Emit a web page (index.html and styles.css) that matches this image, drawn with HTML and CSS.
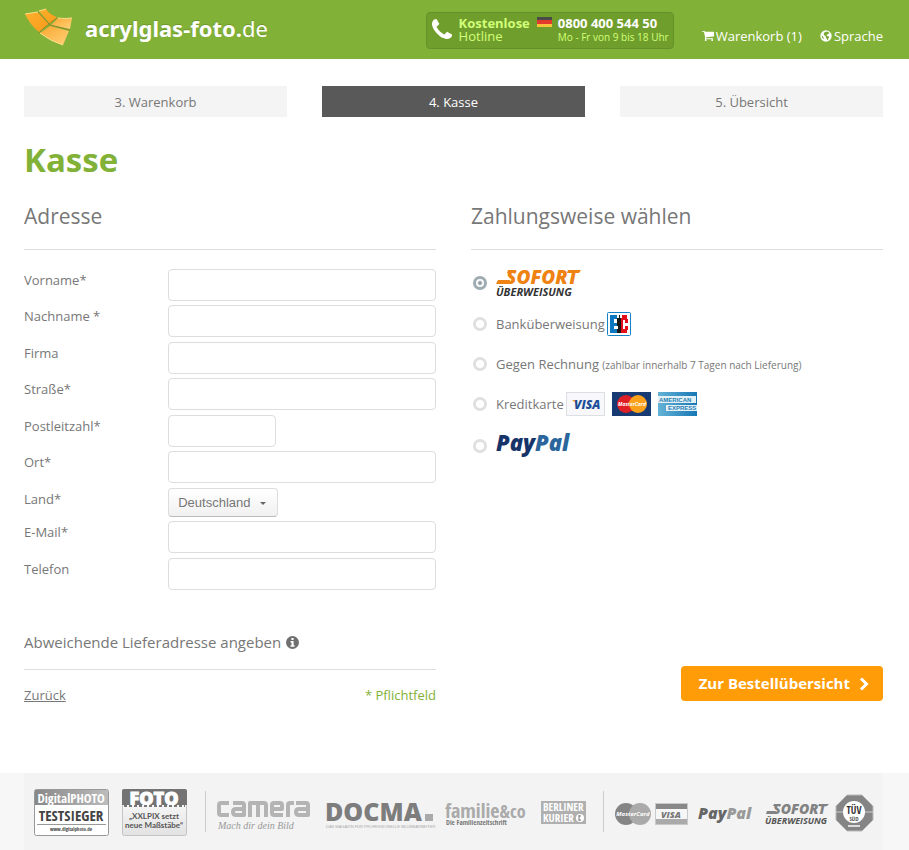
FILE: index.html
```html
<!DOCTYPE html>
<html lang="de">
<head>
<meta charset="utf-8">
<title>Kasse – acrylglas-foto.de</title>
<link rel="stylesheet" href="styles.css">
</head>
<body>
<header class="site-header">
  <a class="brand" href="#">
    <svg class="brand-mark" width="50" height="38" viewBox="0 0 50 38" aria-hidden="true">
      <defs>
        <linearGradient id="tile" x1="0" y1="0" x2="1" y2="1"><stop offset="0" stop-color="#ffb02b"/><stop offset="1" stop-color="#f99a1c"/></linearGradient>
        <linearGradient id="tileLight" x1="0" y1="0" x2="1" y2="1"><stop offset="0" stop-color="#fba62f"/><stop offset="1" stop-color="#ffd27a"/></linearGradient>
      </defs>
      <path d="M1 5 L14 3 L25 15 L15 23 Q6 16 1 5Z" fill="url(#tile)"/>
      <path d="M15 2 L22 0 Q26 6 33 8 L26 15Z" fill="url(#tile)"/>
      <path d="M34 9 Q40 11 48 9 L46 20 L27 16Z" fill="url(#tileLight)"/>
      <path d="M26 17 L45 22 L39 36 Q26 32 16 24Z" fill="url(#tileLight)"/>
      <path d="M1 5 L14 3M15 2 L22 0M34 9 Q41 10 48 9M16 24Q26 32 39 36" stroke="#fbe08c" fill="none"/>
      <path d="M14 3 L26 16 M15 24 Q19 19 33 9 M26 16 L46 21" stroke="#8f8b28" fill="none"/>
    </svg>
    <span class="brand-name"><b>acrylglas-foto.</b>de</span>
  </a>
  <div class="hotline">
    <svg class="hotline-phone" width="20" height="20" viewBox="192 256 1408 1280" aria-hidden="true"><path fill="#fff" d="M1600 1240q0 27-10 70.500t-21 68.500q-21 50-122 106-94 51-186 51-27 0-53-3.500t-57.500-12.500-47-14.500-55.500-20.500-49-18q-98-35-175-83-127-79-264-216t-216-264q-48-77-83-175-3-9-18-49t-20.500-55.500-14.500-47-12.500-57.500-3.500-53q0-92 51-186 56-101 106-122 25-11 68.500-21t70.500-10q14 0 21 3 18 6 53 76 11 19 30 54t35 63.500 31 53.500q3 4 17.500 25t21.500 35.500 7 28.500q0 20-28.500 50t-62 55-62 53-28.500 46q0 9 5 22.500t8.500 20.500 14 24 11.500 19q76 137 174 235t235 174q2 1 19 11.500t24 14 20.500 8.500 22.500 5q18 0 46-28.500t53-62 55-62 50-28.500q14 0 28.500 7t35.500 21.500 25 17.500q25 15 53.500 31t63.500 35 54 30q70 35 76 53 3 7 3 21z"/></svg>
    <div class="hotline-label"><b>Kostenlose</b><span>Hotline</span></div>
    <svg class="flag" width="15" height="10" viewBox="0 0 15 10" aria-hidden="true"><path fill="#4a4a4a" d="M0 0h15v3H0z"/><path fill="#e23a2c" d="M0 3h15v4H0z"/><path fill="#f9c33c" d="M0 7h15v3H0z"/></svg>
    <div class="hotline-number"><b>0800 400 544 50</b><small>Mo - Fr von 9 bis 18 Uhr</small></div>
  </div>
  <nav class="header-nav">
    <a href="#"><svg width="12" height="12" viewBox="0 128 1664 1664" aria-hidden="true"><path fill="#fff" d="M640 1536q0 52-38 90t-90 38-90-38-38-90 38-90 90-38 90 38 38 90zm896 0q0 52-38 90t-90 38-90-38-38-90 38-90 90-38 90 38 38 90zm128-1088v512q0 24-16.500 42.500t-40.500 21.500l-1044 122q13 60 13 70 0 16-24 64h920q26 0 45 19t19 45-19 45-45 19h-1024q-26 0-45-19t-19-45q0-11 8-31.500t16-36 21.500-40 15.500-29.500l-177-823h-204q-26 0-45-19t-19-45 19-45 45-19h256q16 0 28.500 6.500t19.500 15.500 13 24.500 8 26 5.500 29.500 4.500 26h1201q26 0 45 19t19 45z"/></svg>Warenkorb (1)</a>
    <a href="#"><svg width="12" height="12" viewBox="0 0 12 12" aria-hidden="true"><circle cx="6" cy="6" r="5.700" fill="#fff"/><path fill="#78a92f" d="M7 1.600 9 2.400 9.800 3.500 8.400 3.400 7.600 4.600 6.500 4.800 7 6 8.600 6.200 9 7.400 7.800 9.800 7 10.200 6.800 8.600 5.400 7.300 6 5.900 4.400 5.400 3.600 3.900 4.300 2.600ZM1.600 5.400 2.800 6.300 3.700 8 3.600 9.200 2.200 7.800Z"/></svg>Sprache</a>
  </nav>
</header>

<main class="page">
  <ol class="steps">
    <li>3. Warenkorb</li>
    <li class="is-current">4. Kasse</li>
    <li>5. Übersicht</li>
  </ol>
  <h1>Kasse</h1>
  <form class="checkout">
    <section>
      <h2>Adresse</h2>
      <div class="fields">
        <div class="field"><label for="vorname">Vorname*</label><input id="vorname" type="text"></div>
        <div class="field"><label for="nachname">Nachname *</label><input id="nachname" type="text"></div>
        <div class="field"><label for="firma">Firma</label><input id="firma" type="text"></div>
        <div class="field"><label for="strasse">Straße*</label><input id="strasse" type="text"></div>
        <div class="field"><label for="plz">Postleitzahl*</label><input id="plz" class="short" type="text"></div>
        <div class="field"><label for="ort">Ort*</label><input id="ort" type="text"></div>
        <div class="field field-select"><label for="land">Land*</label><span class="select"><select id="land"><option>Deutschland</option></select></span></div>
        <div class="field"><label for="email">E-Mail*</label><input id="email" type="email"></div>
        <div class="field"><label for="telefon">Telefon</label><input id="telefon" type="tel"></div>
      </div>
      <h3>Abweichende Lieferadresse angeben
        <svg width="13" height="13" viewBox="0 0 13 13" aria-hidden="true"><circle cx="6.500" cy="6.500" r="6.500" fill="#6f6f6f"/><path fill="#fff" d="M5.400 2h2.200v2H5.400zM4.500 5h3.100v4.200h1v1.600H4.500V9.200h1V6.600h-1z"/></svg>
      </h3>
      <div class="form-foot"><a href="#">Zurück</a><span>* Pflichtfeld</span></div>
    </section>
    <section class="payment">
      <h2>Zahlungsweise wählen</h2>
      <div class="options">
        <div class="option">
          <input type="radio" name="pay" id="sofort" checked>
          <label for="sofort">
            <svg width="86" height="30" viewBox="0 0 86 30" role="img" aria-label="Sofort Überweisung">
              <path fill="#ee8212" d="M2 12h12l-1 4H0zM12 2h8l-1 3h-8zM72 2h13l-2 3H71z"/>
              <text class="lg-sofort" x="10" y="16">SOFORT</text>
              <text class="lg-ueber" x="0" y="28">ÜBERWEISUNG</text>
            </svg>
          </label>
        </div>
        <div class="option">
          <input type="radio" name="pay" id="bank">
          <label for="bank">Banküberweisung
            <svg width="24" height="24" viewBox="0 0 24 24" aria-hidden="true"><rect x=".5" y=".5" width="23" height="23" rx="1" fill="#fff" stroke="#1682c6"/><path fill="#0b78c0" d="M3 3h8v18H3z"/><path fill="#181818" d="M10 3h4v18h-4z"/><path fill="#e3101b" d="M14 3h7v18h-7z"/><path fill="#fff" d="M7 7h3v4H7zM7 14h4v3H7zM10 3h2v3h-2zM16 8h2v3h3v3h-3v3h-2zM13 3h2v3h-2zM20 3h1v4h-1zM20 18h1v3h-1z"/></svg>
          </label>
        </div>
        <div class="option">
          <input type="radio" name="pay" id="rechnung">
          <label for="rechnung"><span>Gegen Rechnung <small>(zahlbar innerhalb 7 Tagen nach Lieferung)</small></span></label>
        </div>
        <div class="option">
          <input type="radio" name="pay" id="karte">
          <label for="karte">Kreditkarte
            <svg class="cards" width="132" height="24" viewBox="0 0 132 24" role="img" aria-label="Visa, MasterCard, American Express">
              <defs><linearGradient id="amex"><stop offset="0" stop-color="#65b3d6"/><stop offset="1" stop-color="#1677b5"/></linearGradient></defs>
              <rect x=".5" y=".5" width="38" height="23" fill="#f8f8fa" stroke="#dcdfe4"/>
              <path fill="#f3a21b" d="M6 8h4l1 4z"/>
              <text class="lg-visa" x="8" y="17">VISA</text>
              <rect x="46" width="39" height="24" fill="#173a72"/>
              <circle cx="60" cy="12" r="9" fill="#df1f26"/><circle cx="72" cy="12" r="9" fill="#f9a11b"/>
              <text class="lg-mc" x="66" y="14" text-anchor="middle">MasterCard</text>
              <rect x="92" width="39" height="24" fill="url(#amex)"/>
              <path fill="#e3f1f7" d="M92 4h38v7H92zM100 13h31v6h-31z"/>
              <text class="lg-amex" x="93" y="10">AMERICAN</text><text class="lg-amex" x="102" y="18">EXPRESS</text>
            </svg>
          </label>
        </div>
        <div class="option">
          <input type="radio" name="pay" id="paypal">
          <label for="paypal">
            <svg width="80" height="26" viewBox="0 0 80 26" role="img" aria-label="PayPal"><text class="lg-paypal" x="0" y="18"><tspan fill="#17346a">Pay</tspan><tspan fill="#2a659c">Pal</tspan></text></svg>
          </label>
        </div>
      </div>
      <button class="submit" type="submit">Zur Bestellübersicht
        <svg width="10" height="14" viewBox="0 0 10 14" aria-hidden="true"><path d="M2 1.500 7.500 7 2 12.500" fill="none" stroke="#fff" stroke-width="3"/></svg>
      </button>
    </section>
  </form>
</main>

<footer class="site-footer">
  <div class="logos">
    <svg width="78" height="48" viewBox="0 0 78 48" role="img" aria-label="DigitalPHOTO Testsieger">
      <defs><linearGradient id="silver"><stop offset="0" stop-color="#888"/><stop offset="1" stop-color="#bcbcbc"/></linearGradient></defs>
      <rect x=".5" y=".5" width="74" height="46" rx="2" fill="#fff" stroke="#999"/><path fill="url(#silver)" d="M1 1h73v15H1z"/>
      <text class="lg-cond" x="37" y="14" font-size="13" fill="#fff" text-anchor="middle">Digital<tspan font-weight="700">PHOTO</tspan></text>
      <text class="lg-cond" x="37" y="32" font-size="15" font-weight="700" fill="#444" text-anchor="middle">TESTSIEGER</text>
      <path stroke="#999" d="M3 35.500h69"/>
      <text class="lg-cond" x="37" y="42" font-size="5" font-weight="700" fill="#444" text-anchor="middle">www.digitalphoto.de</text>
    </svg>
    <svg width="73" height="48" viewBox="0 0 73 48" role="img" aria-label="Foto Wirtschaft">
      <defs><linearGradient id="paper" x2="0" y2="1"><stop offset="0" stop-color="#fff"/><stop offset="1" stop-color="#e2e2e2"/></linearGradient></defs>
      <rect x=".5" y=".5" width="64" height="46" rx="2" fill="url(#paper)" stroke="#c4c4c4"/><path fill="#737373" d="M0 2q0-2 2-2h61q2 0 2 2v14H0z"/>
      <text class="lg-heavy" x="32" y="16" font-size="18" text-anchor="middle" fill="#fff" stroke="#fff">FOTO</text>
      <path stroke="#777" stroke-dasharray="3 2" stroke-width="2" d="M2 17h61"/>
      <text class="lg-round" x="32" y="30" text-anchor="middle">„XXLPIX setzt</text><text class="lg-round" x="32" y="39" text-anchor="middle">neue Maßstäbe“</text>
    </svg>
    <span class="rule"></span>
    <svg width="100" height="48" viewBox="0 0 100 48" role="img" aria-label="camera – Mach dir dein Bild">
      <g fill="none" stroke="#b4b4b4" stroke-width="4" stroke-linejoin="round">
        <path d="M13 14H5q-2 0-2 2v8q0 2 2 2h8M17 14h9q2 0 2 2v10h-8q-3 0-3-3t3-3h8M34 28V14h14q2 0 2 2v12M42 14v14M56 20h10v-4q0-2-2-2h-6q-2 0-2 2v8q0 2 2 2h9M72 28V16q0-2 2-2h4M80 14h10q2 0 2 2v10h-9q-3 0-3-3t3-3h9"/>
      </g>
      <text class="lg-script" x="2" y="40">Mach dir dein Bild</text>
    </svg>
    <svg width="109" height="48" viewBox="0 0 109 48" role="img" aria-label="DOCMA">
      <text x="-1" y="32" font-family="Open Sans, sans-serif" font-weight="800" font-size="25" fill="#7d7d7d">DOCMA</text><path fill="#aaa" d="M99 25h8v7h-8z"/>
      <text class="lg-micro" x="0" y="39">DAS MAGAZIN FÜR PROFESSIONELLE BILDBEARBEITER</text>
    </svg>
    <svg width="86" height="48" viewBox="0 0 86 48" role="img" aria-label="familie&amp;co – Die Familienzeitschrift">
      <text class="lg-cond" x="0" y="29" font-size="20" font-weight="700" fill="#aaa">familie<tspan font-weight="400" font-size="18">&amp;co</tspan></text>
      <text class="lg-cond" x="1" y="36" font-size="7" font-weight="700" fill="#777">Die Familienzeitschrift</text>
    </svg>
    <svg width="52" height="48" viewBox="0 0 52 48" role="img" aria-label="Berliner Kurier">
      <path fill="#b0b0b0" d="M0 12h45v23H0z"/>
      <text class="lg-cond" x="2" y="22" font-size="11" font-weight="700" fill="#fff">BERLINER</text><text class="lg-cond" x="2" y="33" font-size="11" font-weight="700" fill="#fff">KURIER</text><circle cx="39" cy="29" r="4" fill="#fff"/><path d="M38 26v6M38 27h2M38 31h2" stroke="#777"/>
    </svg>
    <span class="rule"></span>
    <svg width="74" height="48" viewBox="0 0 74 48" role="img" aria-label="MasterCard und Visa">
      <circle cx="12" cy="25" r="11" fill="#858585"/><circle cx="26" cy="25" r="11" fill="#aaa"/><text class="lg-mc lg-mc-grey" x="19" y="27" text-anchor="middle">MasterCard</text>
      <rect x="41" y="14" width="33" height="22" fill="#c9c9c9"/><path fill="#888" d="M42 15h31v5H42z"/><path fill="#f6f6f6" d="M42 20h31v10H42z"/><path fill="#aaa" d="M42 30h31v5H42z"/>
      <text class="lg-visa lg-visa-grey" x="47" y="29">VISA</text>
    </svg>
    <svg width="57" height="48" viewBox="0 0 57 48" role="img" aria-label="PayPal"><text class="lg-paypal lg-paypal-small" x="0" y="30"><tspan fill="#666">Pay</tspan><tspan fill="#999">Pal</tspan></text></svg>
    <svg width="60" height="48" viewBox="0 0 60 48" role="img" aria-label="Sofort Überweisung">
      <path fill="#828282" d="M2 22h9l-1 3H1zM9 15h7l-1 2H8zM54 15h10l-2 2h-9z"/>
      <text class="lg-sofort lg-sofort-small" x="8" y="25">SOFORT</text><text class="lg-ueber lg-ueber-small" x="0" y="35">ÜBERWEISUNG</text>
    </svg>
    <svg width="39" height="48" viewBox="0 0 39 48" role="img" aria-label="TÜV">
      <path fill="#858585" stroke="#bbb" d="M12 6h15l11 11v14L27 42H12L1 31V17z"/><path stroke="#ccc" d="M1 23h37"/>
      <circle cx="19" cy="23" r="11" fill="#fff"/>
      <text class="lg-cond" x="19" y="25" font-size="10" font-weight="700" fill="#333" text-anchor="middle">TÜV</text><text class="lg-cond" x="19" y="32" font-size="6" fill="#555" text-anchor="middle">SÜD</text><path stroke="#ddd" stroke-width="2" d="M13 37h12"/>
    </svg>
  </div>
</footer>
</body>
</html>
```
FILE: styles.css
```css
* { box-sizing: border-box; }
body {
  margin: 0;
  min-height: 100vh;
  display: flex;
  flex-direction: column;
  background: #fff;
  color: #777;
  font: 13px/20px "Open Sans", sans-serif;
}
svg { flex: none; overflow: visible; }
h1, h2, h3, ol { margin: 0; padding: 0; }

.site-header {
  display: flex;
  align-items: flex-start;
  height: 59px;
  padding: 0 26px 0 24px;
  background: #82b138;
  color: #fff;
}
.site-header a { color: #fff; text-decoration: none; }
.brand { display: flex; gap: 11px; padding-top: 9px; }
.brand-name {
  font: 22px/38px "Noto Sans", sans-serif;
  text-shadow: 0 -1px 0 #6d982b;
  white-space: nowrap;
}
.hotline {
  display: flex;
  margin: 12px 0 0 auto;
  padding: 4px 4px 4px 5px;
  height: 37px;
  border: 1px solid #63922a;
  border-radius: 4px;
  background: #709e2d;
  line-height: 13px;
  white-space: nowrap;
}
.hotline b, .hotline span, .hotline small { display: block; }
.hotline-phone { margin: 3px 7px 0 0; }
.hotline-label { color: #d2ff78; }
.flag { margin: 0 6px 0 7px; }
.hotline-number small { color: #d2ff78; font-size: 10px; line-height: 15px; }
.header-nav { display: flex; gap: 18px; margin-left: 28px; padding-top: 26px; white-space: nowrap; }
.header-nav a { display: flex; align-items: center; gap: 2px; }

.page { padding: 27px 26px 0 24px; }
.steps { display: grid; grid-template-columns: repeat(3, 1fr); gap: 35px; list-style: none; }
.steps li { padding-top: 2px; background: #f4f4f4; line-height: 29px; text-align: center; }
.steps .is-current { background: #595959; color: #fff; }

h1 { margin-top: 20px; color: #82b138; font-size: 33px; line-height: 46px; }
.checkout { display: grid; grid-template-columns: 1fr 1fr; gap: 35px; }
h2 {
  padding: 17px 0;
  border-bottom: 1px solid #ddd;
  font-size: 21px;
  font-weight: 400;
  line-height: 32px;
}
.fields { padding-top: 19px; }
.field { display: flex; align-items: flex-start; height: 36px; }
.field:nth-child(even) { height: 37px; }
.field-select { height: 33px; }
.field label { width: 35%; line-height: 22px; }
.field input {
  flex: 1;
  min-width: 0;
  height: 32px;
  padding: 0 8px;
  border: 1px solid #ddd;
  border-radius: 4px;
  background: #fff;
  font: inherit;
  color: inherit;
}
.field .short { flex: none; width: 108px; }
.select { position: relative; width: 110px; }
.select select {
  display: block;
  width: 100%;
  height: 29px;
  padding: 0 9px;
  border: 1px solid #ddd;
  border-bottom-color: #bbb;
  border-radius: 4px;
  background: linear-gradient(#fff, #f1f1f1);
  color: #777;
  font: 13px "Liberation Sans", sans-serif;
  appearance: none;
}
.select::after {
  content: "";
  position: absolute;
  right: 12px;
  top: 14px;
  border: 3px solid transparent;
  border-top-color: #666;
  border-bottom: 0;
}
h3 {
  display: flex;
  align-items: center;
  gap: 5px;
  margin-top: 37px;
  padding-bottom: 16px;
  border-bottom: 1px solid #ddd;
  font-size: 15px;
  font-weight: 400;
  line-height: 22px;
}
.form-foot { display: flex; justify-content: space-between; padding-top: 15px; }
.form-foot a { color: #777; }
.form-foot span { color: #82b138; }

.payment { display: flex; flex-direction: column; }
.options { padding-top: 11px; }
.option { display: flex; align-items: center; height: 40px; padding-left: 2px; }
.option:first-child, .option:last-child { height: 43px; }
.option input {
  appearance: none;
  flex: none;
  width: 14px;
  height: 14px;
  margin: 0 9px 0 0;
  border: 3px solid #e0e0e0;
  border-radius: 50%;
}
.option input:checked { border-color: #9eabb0; background: radial-gradient(circle, #8d9a9f 1px, #fff 3px); }
.option label { display: flex; align-items: center; gap: 2px; }
.option small { font-size: 10px; }
.submit {
  display: flex;
  align-items: center;
  gap: 9px;
  align-self: flex-end;
  margin: auto 0 4px;
  height: 35px;
  padding: 0 14px 0 18px;
  border: 0;
  border-radius: 4px;
  background: #ff9c08;
  color: #fff;
  font: bold 15px/35px "Open Sans", sans-serif;
}

.site-footer { margin-top: auto; height: 77px; padding: 0 26px 0 24px; background: #f7f7f7; }
.logos { display: flex; align-items: flex-start; gap: 10px; height: 100%; padding: 16px 0 0 10px; background: #f3f3f3; overflow: hidden; }
.rule { flex: none; width: 1px; height: 41px; margin-top: 2px; background: #ccc; }

.lg-sofort { font: italic 800 19px "Open Sans", sans-serif; fill: #ee8212; }
.lg-sofort-small { font-size: 14px; fill: #828282; }
.lg-ueber { font: italic 700 11px "Open Sans", sans-serif; fill: #333; }
.lg-ueber-small { font-size: 9px; fill: #555; }
.lg-visa { font: italic 800 12px "Open Sans", sans-serif; fill: #1d4e98; }
.lg-visa-grey { font-size: 9px; fill: #777; }
.lg-mc { font: italic 700 5px "Open Sans", sans-serif; fill: #fff; }
.lg-mc-grey { font-size: 6px; }
.lg-amex { font: 700 6px "Liberation Sans", sans-serif; fill: #2380b5; }
.lg-paypal { font: italic 800 22px "Open Sans", sans-serif; }
.lg-paypal-small { font-size: 16px; }
.lg-cond { font-family: "Open Sans Condensed", "Liberation Sans Narrow", "Open Sans", sans-serif; }
.lg-heavy { font-family: "Open Sans", sans-serif; font-weight: 800; }
.lg-round { font: 700 8px Lato, sans-serif; fill: #555; }
.lg-script { font: italic 10px "Liberation Serif", serif; fill: #999; }
.lg-micro { font: 4px "Liberation Sans", sans-serif; fill: #aaa; }
```
